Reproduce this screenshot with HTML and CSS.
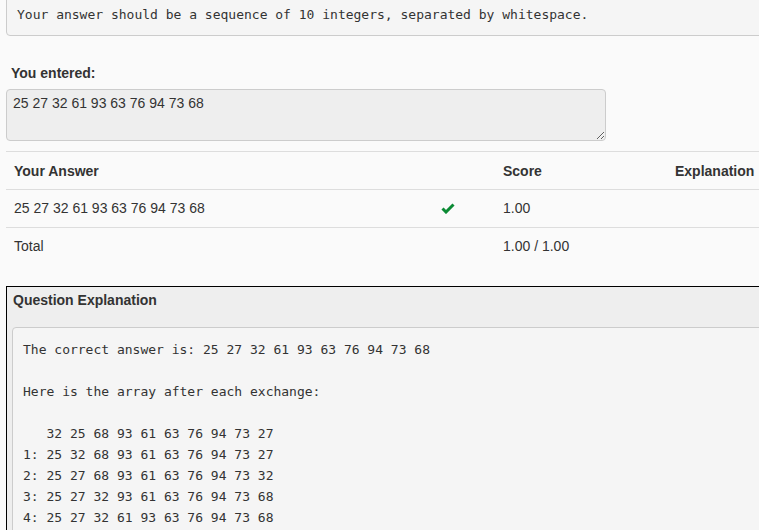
FILE: index.html
```html
<!DOCTYPE html>
<html>
<head>
<meta charset="utf-8">
<link rel="stylesheet" href="styles.css">
</head>
<body>
<div class="page">
  <pre class="hint">Your answer should be a sequence of 10 integers, separated by whitespace.</pre>

  <div class="entered-label">You entered:</div>
  <textarea class="entered" readonly>25 27 32 61 93 63 76 94 73 68</textarea>

  <table class="results">
    <colgroup>
      <col class="c-answer"><col class="c-mark"><col class="c-score"><col class="c-expl">
    </colgroup>
    <thead>
      <tr><th>Your Answer</th><th></th><th>Score</th><th>Explanation</th></tr>
    </thead>
    <tbody>
      <tr>
        <td>25 27 32 61 93 63 76 94 73 68</td>
        <td class="mark"><svg class="check" width="14" height="11" viewBox="0 0 14 11"><path d="M1.5 5.5 L5 9 L12.5 1.5" fill="none" stroke="#0b8a34" stroke-width="3"/></svg></td>
        <td>1.00</td>
        <td></td>
      </tr>
      <tr>
        <td>Total</td>
        <td></td>
        <td>1.00 / 1.00</td>
        <td></td>
      </tr>
    </tbody>
  </table>

  <div class="panel">
    <div class="panel-title">Question Explanation</div>
    <pre class="explain">The correct answer is: 25 27 32 61 93 63 76 94 73 68

Here is the array after each exchange:

   32 25 68 93 61 63 76 94 73 27
1: 25 32 68 93 61 63 76 94 73 27
2: 25 27 68 93 61 63 76 94 73 32
3: 25 27 32 93 61 63 76 94 73 68
4: 25 27 32 61 93 63 76 94 73 68</pre>
  </div>
</div>
</body>
</html>
```

FILE: styles.css
```css
html, body {
  margin: 0;
  padding: 0;
  background: #fafafa;
  overflow: hidden;
  height: 530px;
}

.page {
  width: 820px;
  padding-left: 6px;
  font-family: "Liberation Sans", Arial, sans-serif;
  font-size: 14px;
  line-height: 21px;
  color: #333;
}

.hint {
  margin: -7px 0 0 0;
  padding: 10px 10px;
  font-family: "DejaVu Sans Mono", monospace;
  font-size: 13px;
  line-height: 21px;
  color: #333;
  background: #f5f5f5;
  border: 1px solid #ccc;
  border-radius: 4px;
}

.entered-label {
  margin-top: 27px;
  padding-left: 5px;
  font-weight: bold;
}

.entered {
  display: block;
  box-sizing: border-box;
  width: 600px;
  height: 52px;
  margin: 5px 0 0 0;
  padding: 3px 6px;
  font-family: "Liberation Sans", Arial, sans-serif;
  font-size: 14px;
  line-height: 20px;
  color: #333;
  background: #eee;
  border: 1px solid #ccc;
  border-radius: 4px;
  outline: none;
}

.results {
  margin-top: 10px;
  width: 820px;
  border-collapse: collapse;
  table-layout: fixed;
}

.c-answer { width: 427px; }
.c-mark { width: 62px; }
.c-score { width: 172px; }

.results th,
.results td {
  padding: 8px 8px;
  text-align: left;
  vertical-align: top;
  line-height: 21px;
}

.results thead th {
  border-top: 1px solid #ddd;
  font-weight: bold;
  padding-top: 9px;
  padding-bottom: 7px;
}

.results tbody td {
  border-top: 1px solid #ddd;
}

.check {
  display: block;
  margin-top: 5px;
}

.panel {
  margin-top: 21px;
  padding: 3px 5px 10px 5px;
  background: #eee;
  border: 1px solid #000;
}

.panel-title {
  padding-left: 1px;
  font-weight: bold;
  line-height: 20px;
}

.explain {
  margin: 17px 0 0 0;
  padding: 11px 10px 10px 10px;
  font-family: "DejaVu Sans Mono", monospace;
  font-size: 13px;
  line-height: 21px;
  color: #333;
  background: #f5f5f5;
  border: 1px solid #ccc;
  border-radius: 4px;
}
```
